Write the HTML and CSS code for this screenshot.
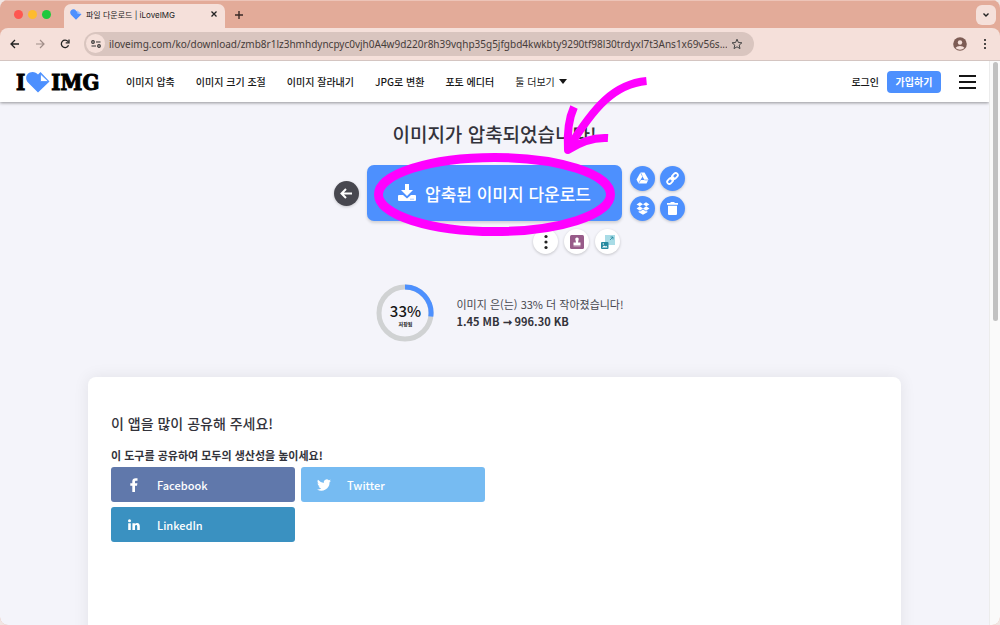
FILE: index.html
```
<!DOCTYPE html>
<html lang="ko">

<head>
    <meta charset="UTF-8">
    <meta name="viewport" content="width=device-width, initial-scale=1.0">
    <title>파일 다운로드 | iLoveIMG</title>
    <link rel="stylesheet" href="styles.css">
</head>

<body>
    <div class="browser">
        <!-- tabs -->
        <div class="tabbar">
            <div class="lights">
                <span class="red"></span>
                <span class="yellow"></span>
                <span class="green"></span>
            </div>
            <div class="tab">
                <svg width="12" height="11" viewBox="0 0 24 21">
                    <path fill="#4d90fe" d="M12 21 2 11C-2 6 2 0 7 0c2 0 4 1 5 3l7 6 4 1z" />
                    <path fill="#9cc2ff" d="m14 2 9 7h-8z" />
                </svg>
                <span class="tab_title">파일 다운로드 | iLoveIMG</span>
                <button class="plain" aria-label="탭 닫기">
                    <svg width="6" height="6" viewBox="0 0 6 6"><path d="m.5.5 5 5m0-5-5 5" stroke="#222" stroke-width="1.3" /></svg>
                </button>
            </div>
            <button class="plain new_tab" aria-label="새 탭">
                <svg width="8" height="8" viewBox="0 0 8 8"><path d="M4 0v8M0 4h8" stroke="#3a2a26" stroke-width="1.4" /></svg>
            </button>
            <button class="plain tab_search" aria-label="탭 검색">
                <svg width="6" height="4" viewBox="0 0 6 4"><path d="m.5.5 2.500 2.500 2.500-2.500" fill="none" stroke="#222" stroke-width="1.400" /></svg>
            </button>
        </div>

        <!-- address bar -->
        <div class="toolbar">
            <button class="plain" aria-label="뒤로">
                <svg width="10" height="10" viewBox="0 0 10 10"><path d="M9 5H1.500M5 1 1 5l4 4" fill="none" stroke="#222" stroke-width="1.300" /></svg>
            </button>
            <button class="plain" aria-label="앞으로">
                <svg width="10" height="10" viewBox="0 0 10 10"><path d="M1 5h7.500M5 1l4 4-4 4" fill="none" stroke="#a08d88" stroke-width="1.200" /></svg>
            </button>
            <button class="plain" aria-label="새로고침">
                <svg width="10" height="10" viewBox="0 0 10 10"><path d="M8.500 6.200A3.700 3.700 0 1 1 8 2.700M9 .5v3.300H5.700" fill="none" stroke="#222" stroke-width="1.300" /></svg>
            </button>
            <div class="address">
                <span class="site_info">
                    <svg width="10" height="8" viewBox="0 0 10 8" fill="none" stroke="#333" stroke-width="1.200">
                        <circle cx="2" cy="2" r="1.300" /><path d="M5 2h4.500M.5 6H5" /><circle cx="8" cy="6" r="1.300" />
                    </svg>
                </span>
                <input type="text" aria-label="주소" value="iloveimg.com/ko/download/zmb8r1lz3hmhdyncpyc0vjh0A4w9d220r8h39vqhp35g5jfgbd4kwkbty9290tf98l30trdyxl7t3Ans1x69v56s...">
                <button class="plain" aria-label="북마크">
                    <svg width="12" height="12" viewBox="0 0 12 12"><path d="m6 1.200 1.400 3.300 3.500.3-2.700 2.300.8 3.500L6 8.800l-3 1.800.8-3.500-2.700-2.300 3.500-.3z" fill="none" stroke="#444" /></svg>
                </button>
            </div>
            <div class="profile">
                <button class="plain" aria-label="프로필">
                    <svg width="14" height="14" viewBox="0 0 14 14">
                        <circle cx="7" cy="7" r="6.800" fill="#7d5c54" />
                        <circle cx="7" cy="5.500" r="2.200" fill="#f5e0da" />
                        <path d="M2.500 11C4 8.300 10 8.300 11.500 11A6.500 6.500 0 0 1 2.500 11z" fill="#f5e0da" />
                    </svg>
                </button>
                <button class="plain" aria-label="메뉴">
                    <svg width="4" height="12" viewBox="0 0 4 12" fill="#222"><circle cx="2" cy="2" r="1.100" /><circle cx="2" cy="6" r="1.100" /><circle cx="2" cy="10" r="1.100" /></svg>
                </button>
            </div>
        </div>

        <div class="viewport">
            <div class="page">
                <header class="header">
                    <a href="#" class="logo" aria-label="I love IMG">
                        <span>I</span>
                        <svg width="24" height="22" viewBox="0 0 24 22">
                            <path fill="#4d90fe" d="M12 21.500 2 11.500C-2 7 1 1 6.500 1 9 1 10.500 2 12 3.500L14.500 1 23.500 10.500z" />
                            <path fill="#fff" stroke="#4d90fe" stroke-width=".8" d="M14.500 3 22.500 10.500h-8z" />
                        </svg>
                        <span>IMG</span>
                    </a>
                    <nav>
                        <ul class="menu">
                            <li><a href="#">이미지 압축</a></li>
                            <li><a href="#">이미지 크기 조절</a></li>
                            <li><a href="#">이미지 잘라내기</a></li>
                            <li><a href="#">JPG로 변환</a></li>
                            <li><a href="#">포토 에디터</a></li>
                            <li class="more"><a href="#">툴 더보기</a></li>
                        </ul>
                    </nav>
                    <div class="user">
                        <a href="#">로그인</a>
                        <button class="signup">가입하기</button>
                        <button class="plain burger" aria-label="전체 메뉴"><span></span><span></span><span></span></button>
                    </div>
                </header>

                <main>
                    <section class="result">
                        <h1>이미지가 압축되었습니다!</h1>
                        <div class="actions">
                            <button class="round dark back" aria-label="돌아가기">
                                <svg width="13" height="11" viewBox="0 0 13 11"><path d="M12 5.500H2M6 1 1.500 5.500 6 10" fill="none" stroke="#fff" stroke-width="2" /></svg>
                            </button>
                            <button class="download">
                                <svg width="18" height="18" viewBox="0 0 18 18" fill="#fff">
                                    <path d="M7 0h4v6h4l-6 6-6-6h4z" />
                                    <path d="M1 11h4l4 3.500 4-3.500h4a1 1 0 0 1 1 1v4a1 1 0 0 1-1 1H1a1 1 0 0 1-1-1v-4a1 1 0 0 1 1-1z" />
                                    <path d="M12.500 15.200h1m1 0h1" stroke="#4d90fe" />
                                </svg>
                                압축된 이미지 다운로드
                            </button>
                            <div class="save">
                                <button class="round" aria-label="Google Drive">
                                    <svg width="13" height="12" viewBox="0 0 13 12">
                                        <path d="M4.500.5h4l4 7-2 4h-8l-2-4z" fill="#fff" />
                                        <path d="m6.500 4.500 2 3.500h-4z" fill="#4d90fe" />
                                        <path d="m6.500 4.500-2-4m4 7.500h4m-8 0-2 3.500" stroke="#4d90fe" stroke-width=".6" />
                                    </svg>
                                </button>
                                <button class="round" aria-label="링크 복사">
                                    <svg width="15" height="15" viewBox="0 0 15 15" fill="none" stroke="#fff" stroke-width="1.800">
                                        <rect x="-3.200" y="-2" width="6.500" height="4.200" rx="2.100" transform="translate(5 10) rotate(-45)" />
                                        <rect x="-3.200" y="-2" width="6.500" height="4.200" rx="2.100" transform="translate(9.800 5) rotate(-45)" />
                                        <path d="m5.800 9.200 3.400-3.400" />
                                    </svg>
                                </button>
                                <button class="round" aria-label="Dropbox">
                                    <svg width="14" height="13" viewBox="0 0 13 12" fill="#fff">
                                        <path d="M3.700.2 6.500 2 3.500 4 .5 2.200zM9.300.2 6.500 2l3 2 3-1.800zM.5 6l3-2 3 2-2.800 2zM12.500 6l-3-2-3 2 2.800 2zM6.500 7l2.800 1.800 1.200-.7v1.400l-4 2.300-4-2.300V8.100l1.200.7z" />
                                    </svg>
                                </button>
                                <button class="round" aria-label="삭제">
                                    <svg width="11" height="13" viewBox="0 0 11 13" fill="#fff">
                                        <path d="M3.500 0h4v1H11v1.700H0V1h3.500zM1 3.700h9V12a1 1 0 0 1-1 1H2a1 1 0 0 1-1-1z" />
                                    </svg>
                                </button>
                            </div>
                            <div class="next">
                                <button class="round white" aria-label="더보기">
                                    <svg width="4" height="16" viewBox="0 0 4 16" fill="#222"><circle cx="2" cy="2.500" r="1.600" /><circle cx="2" cy="8" r="1.600" /><circle cx="2" cy="13.500" r="1.600" /></svg>
                                </button>
                                <button class="round white" aria-label="워터마크">
                                    <svg width="14" height="14" viewBox="0 0 14 14">
                                        <rect width="14" height="14" rx="1.500" fill="#985b89" />
                                        <path d="M7 2.500a1.700 1.700 0 0 1 1.500 2.600L8 7.500h2.500v2.500h-7V7.500H6l-.5-2.400A1.700 1.700 0 0 1 7 2.500zM3.500 10.500h7v.8h-7z" fill="#fff" />
                                    </svg>
                                </button>
                                <button class="round white" aria-label="크기 조절">
                                    <svg width="14" height="14" viewBox="0 0 14 14">
                                        <path d="M4 0h10v10H4z" fill="#a9dce6" />
                                        <path d="M9 5l3-3m-2.500 0H12v2.500" fill="none" stroke="#258aa0" stroke-width=".8" />
                                        <rect y="7" width="7.500" height="7" rx="1" fill="#258aa0" />
                                        <path d="m1 12.500 2-2 1.300 1 1-.8 1.200 1.800z" fill="#fff" />
                                        <circle cx="2.300" cy="9" r=".7" fill="#fff" />
                                    </svg>
                                </button>
                            </div>
                        </div>

                        <div class="saved">
                            <div class="ring">
                                <svg width="58" height="58" viewBox="0 0 58 58" fill="none" stroke-width="5">
                                    <circle cx="29" cy="29" r="26" stroke="#d0d2d3" />
                                    <path d="M29 3a26 26 0 0 1 25.800 29.500" stroke="#4d90fe" />
                                </svg>
                                <div class="ring_text">
                                    <strong>33%</strong>
                                    <small>저장됨</small>
                                </div>
                            </div>
                            <div class="saved_text">
                                <p>이미지 은(는) 33% 더 작아졌습니다!</p>
                                <p><b>1.45 MB ➞ 996.30 KB</b></p>
                            </div>
                        </div>

                        <!-- hand-drawn mark over the download button -->
                        <svg class="mark" width="280" height="164" viewBox="370 75 280 164" fill="none" stroke="#f0f" stroke-width="8">
                            <ellipse cx="494.500" cy="194.500" rx="116" ry="37" stroke-width="9" />
                            <path d="M646.500 81C614 84 594 107 568 149" />
                            <path d="M574 107c-5 11-7 27-6 43 12-8 24-13 40-12" stroke-linejoin="round" />
                        </svg>
                    </section>

                    <section class="share">
                        <h2>이 앱을 많이 공유해 주세요!</h2>
                        <h3>이 도구를 공유하여 모두의 생산성을 높이세요!</h3>
                        <div class="share_list">
                            <a href="#" class="facebook">
                                <svg width="14" height="14" viewBox="0 0 14 14" fill="#fff"><path d="M5.300 14V7.800H3.300V5.300h2V3.500C5.300 1.300 6.500.3 8.600.3h1.900v2.400H9.200c-1 0-1.200.4-1.200 1.200v1.400h2.400L10 7.800H8V14z" /></svg>
                                Facebook
                            </a>
                            <a href="#" class="twitter">
                                <svg width="14" height="14" viewBox="0 0 24 24" fill="#fff"><path d="M24 4.600a10 10 0 0 1-2.800.8 5 5 0 0 0 2.100-2.700 10 10 0 0 1-3.100 1.200 4.900 4.900 0 0 0-8.400 4.500A14 14 0 0 1 1.700 3.200a4.900 4.900 0 0 0 1.500 6.500 5 5 0 0 1-2.200-.6 4.900 4.900 0 0 0 3.900 4.900 5 5 0 0 1-2.200.1 4.900 4.900 0 0 0 4.600 3.400A10 10 0 0 1 0 19.500 14 14 0 0 0 21.500 7.100 10 10 0 0 0 24 4.600z" /></svg>
                                Twitter
                            </a>
                            <a href="#" class="linkedin">
                                <svg width="14" height="14" viewBox="0 0 14 14" fill="#fff"><circle cx="2.500" cy="2.700" r="1.500" /><path d="M1.200 5.200h2.600V12H1.200zM5.400 5.200h2.500v.9c.5-.7 1.200-1.100 2.200-1.100 2 0 2.700 1.300 2.700 3.200V12h-2.600V8.600c0-.9-.2-1.500-1-1.500s-1.200.6-1.200 1.500V12H5.400z" /></svg>
                                LinkedIn
                            </a>
                        </div>
                    </section>
                </main>
            </div>
            <div class="scrollbar"><span></span></div>
        </div>
    </div>
</body>

</html>
```
FILE: styles.css
```
* {
    margin: 0;
    padding: 0;
    box-sizing: border-box;
}

body {
    background-color: #f1e6e3;
    font-family: "Noto Sans CJK KR", sans-serif;
    font-size: 11px;
    color: #161616;
}

li {
    list-style: none;
}

a {
    color: inherit;
    text-decoration: none;
}

button {
    border: 0;
    font-family: inherit;
    cursor: pointer;
}

svg {
    display: block;
    flex-shrink: 0;
}

.plain {
    display: flex;
    align-items: center;
    justify-content: center;
    background: none;
}

/* browser window */
.browser {
    display: flex;
    flex-direction: column;
    height: 100vh;
    overflow: hidden;
    border-radius: 8px;
    background-color: #e3ab99;
}

.tabbar {
    display: flex;
    align-items: center;
    height: 28px;
    flex-shrink: 0;
    padding: 0 4px 0 14px;
    border-top: 1px solid #edc4b8;
}

.lights {
    display: flex;
    gap: 5px;
    width: 50px;
}

.lights span {
    width: 9px;
    height: 9px;
    border-radius: 50%;
}

.red {
    background-color: #fe5750;
}

.yellow {
    background-color: #febb2e;
}

.green {
    background-color: #1fc83c;
}

.tab {
    display: flex;
    align-items: center;
    align-self: flex-end;
    width: 161px;
    height: 24px;
    padding: 0 8px 4px 6px;
    border-radius: 7px 7px 0 0;
    background-color: #f5e0da;
}

.tab_title {
    flex: 1;
    padding-left: 4px;
    font-family: Inter, "Noto Sans CJK KR", sans-serif;
    font-size: 8px;
    color: #222;
}

.new_tab {
    margin-left: 10px;
}

.tab_search {
    width: 20px;
    height: 20px;
    margin-left: auto;
    border-radius: 6px;
    background-color: #f5e0da;
}

.toolbar {
    display: flex;
    align-items: center;
    gap: 15px;
    height: 33px;
    flex-shrink: 0;
    padding: 0 13px 1px 10px;
    border-bottom: 1px solid #d4c5c1;
    border-radius: 8px 8px 0 0;
    background-color: #f5e0da;
}

.address {
    display: flex;
    align-items: center;
    flex: 1;
    max-width: 670px;
    height: 24px;
    margin-left: -1px;
    padding: 0 11px 0 2px;
    border-radius: 12px;
    background-color: #d9c5bf;
}

.site_info {
    display: flex;
    align-items: center;
    justify-content: center;
    width: 19px;
    height: 19px;
    border-radius: 50%;
    background-color: #f5e0da;
}

.address input {
    flex: 1;
    min-width: 0;
    margin: 0 4px;
    border: 0;
    background: none;
    font-family: "Noto Sans", sans-serif;
    font-size: 10px;
    color: #463c3a;
}

.profile {
    display: flex;
    gap: 16px;
    margin-left: auto;
}

/* page */
.viewport {
    display: flex;
    flex: 1;
    min-height: 0;
}

.page {
    flex: 1;
    overflow: hidden;
    background-color: #f4f4fa;
}

.scrollbar {
    width: 11px;
    padding: 1px 2px 0 3px;
    border-left: 1px solid #ececec;
    background-color: #fafafa;
}

.scrollbar span {
    display: block;
    height: 46%;
    border-radius: 3px;
    background-color: #c1c1c1;
}

.header {
    display: flex;
    align-items: center;
    height: 41px;
    padding: 0 13px 0 16px;
    background-color: #fff;
    box-shadow: 0 1px 3px rgba(0, 0, 0, .4);
}

.logo {
    display: flex;
    align-items: center;
    gap: 1px;
    width: 110px;
    font-family: "DejaVu Serif Condensed", "DejaVu Serif", serif;
    font-size: 22px;
    font-weight: bold;
    line-height: 24px;
    color: #000;
    -webkit-text-stroke: 1px #000;
}

.menu {
    display: flex;
    gap: 21px;
    font-size: 10px;
    font-weight: 500;
    white-space: nowrap;
}

.more {
    display: flex;
    align-items: center;
    gap: 4px;
    font-weight: 400;
}

.more::after {
    content: "";
    border: 4px solid transparent;
    border-top: 5px solid #161616;
    border-bottom: 0;
}

.user {
    display: flex;
    align-items: center;
    margin-left: auto;
    font-size: 10px;
    font-weight: 500;
}

.signup {
    width: 54px;
    height: 22px;
    margin: 0 18px 0 8px;
    border-radius: 4px;
    background-color: #4d90fe;
    color: #fff;
    font-size: 10px;
    font-weight: 700;
}

.burger {
    flex-direction: column;
    gap: 4px;
}

.burger span {
    width: 17px;
    height: 2px;
    background-color: #161616;
}

/* result */
.result {
    position: relative;
    height: 275px;
    padding-top: 17px;
}

.result h1 {
    font-size: 19px;
    font-weight: 500;
    line-height: 30px;
    text-align: center;
    color: #33333b;
}

.actions {
    display: grid;
    grid-template-columns: 1fr 255px 1fr;
    gap: 8px;
    align-items: center;
    margin-top: 16px;
}

.round {
    display: flex;
    align-items: center;
    justify-content: center;
    width: 25px;
    height: 25px;
    border-radius: 50%;
    background-color: #4d90fe;
    box-shadow: 0 1px 3px rgba(0, 0, 0, .2);
}

.dark {
    background-color: #47474f;
}

.white {
    background-color: #fff;
}

.back {
    justify-self: end;
}

.download {
    display: flex;
    align-items: center;
    justify-content: center;
    gap: 9px;
    height: 56px;
    border-radius: 7px;
    background-color: #4d90fe;
    box-shadow: 0 2px 3px rgba(0, 0, 0, .15);
    color: #fff;
    font-size: 17px;
    font-weight: 500;
}

.save {
    display: grid;
    grid-template-columns: 25px 25px;
    gap: 5px;
}

.next {
    display: flex;
    grid-column: 2;
    justify-content: flex-end;
    gap: 6px;
    padding-right: 2px;
}

.saved {
    display: flex;
    align-items: center;
    justify-content: center;
    gap: 22px;
    margin-top: 30px;
    padding-left: 11px;
}

.ring {
    position: relative;
}

.ring_text {
    position: absolute;
    inset: 0;
    display: flex;
    flex-direction: column;
    align-items: center;
    justify-content: center;
    padding-top: 3px;
    color: #161616;
}

.ring_text strong {
    font-size: 15px;
    font-weight: 500;
    line-height: 18px;
}

.ring_text small {
    font-size: 5px;
    font-weight: 700;
    line-height: 8px;
}

.saved_text {
    line-height: 17px;
    color: #47474f;
}

.saved_text b {
    color: #33333b;
}

.mark {
    position: absolute;
    top: -27px;
    left: 50%;
    margin-left: -125px;
    pointer-events: none;
}

/* share */
.share {
    min-height: 400px;
    margin: 0 88px;
    padding: 34px 23px;
    border-radius: 8px;
    background-color: #fff;
    box-shadow: 0 0 16px rgba(0, 0, 0, .08);
    color: #33333b;
}

.share h2 {
    font-size: 14px;
    font-weight: 500;
    line-height: 24px;
}

.share h3 {
    margin: 12px 0 4px;
    font-size: 11px;
    font-weight: 700;
    line-height: 16px;
}

.share_list {
    display: grid;
    grid-template-columns: 184px 184px;
    gap: 5px 6px;
}

.share_list a {
    display: flex;
    align-items: center;
    gap: 16px;
    height: 35px;
    padding-left: 16px;
    border-radius: 3px;
    color: #fff;
    font-size: 11px;
    font-weight: 500;
}

.facebook {
    background-color: #6078ab;
}

.twitter {
    background-color: #76bbf2;
}

.linkedin {
    background-color: #3a91c1;
}
```
